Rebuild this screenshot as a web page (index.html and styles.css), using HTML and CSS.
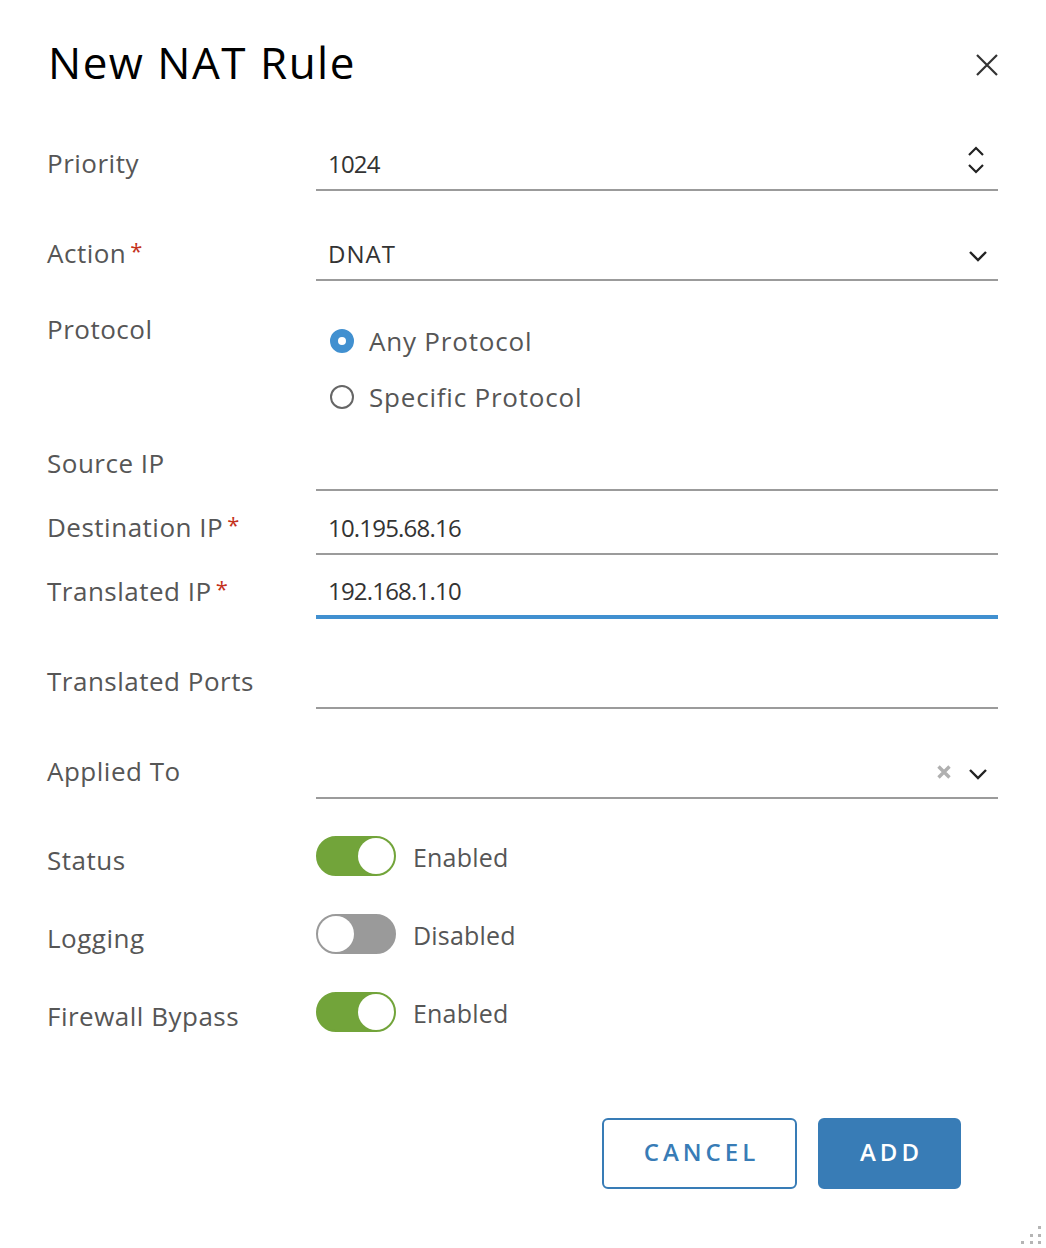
FILE: index.html
```html
<!DOCTYPE html>
<html lang="en">
<head>
<meta charset="utf-8">
<title>New NAT Rule</title>
<link rel="stylesheet" href="styles.css">
</head>
<body>
<div class="modal">
  <div class="header">
    <h1 class="title">New NAT Rule</h1>
    <button class="close" aria-label="Close">
      <svg width="22" height="22" viewBox="0 0 22 22"><path d="M1 1 L21 21 M21 1 L1 21" stroke="#333" stroke-width="2.2" fill="none"/></svg>
    </button>
  </div>

  <div class="form">
    <div class="row">
      <div class="label">Priority</div>
      <div class="control">
        <span class="value num">1024</span>
        <svg class="spin" width="20" height="36" viewBox="0 0 20 36"><path d="M3 10 L10 3 L17 10 M3 20 L10 27 L17 20" stroke="#222" stroke-width="2.2" fill="none"/></svg>
      </div>
    </div>

    <div class="row mt36">
      <div class="label">Action<span class="req">*</span></div>
      <div class="control">
        <span class="value caps">DNAT</span>
        <svg class="chev" width="20" height="12" viewBox="0 0 20 12"><path d="M2 2 L10 10 L18 2" stroke="#222" stroke-width="2.4" fill="none"/></svg>
      </div>
    </div>

    <div class="row mt32">
      <div class="label label-top">Protocol</div>
      <div class="radios">
        <div class="radio-item"><span class="radio checked"></span><span class="radio-text">Any Protocol</span></div>
        <div class="radio-item"><span class="radio"></span><span class="radio-text">Specific Protocol</span></div>
      </div>
    </div>

    <div class="row mt12">
      <div class="label">Source IP</div>
      <div class="control"></div>
    </div>

    <div class="row mt10">
      <div class="label">Destination IP<span class="req">*</span></div>
      <div class="control"><span class="value num">10.195.68.16</span></div>
    </div>

    <div class="row mt10">
      <div class="label">Translated IP<span class="req">*</span></div>
      <div class="control focused"><span class="value num">192.168.1.10</span></div>
    </div>

    <div class="row mt36">
      <div class="label">Translated Ports</div>
      <div class="control"></div>
    </div>

    <div class="row mt36">
      <div class="label">Applied To</div>
      <div class="control">
        <svg class="clear" width="14" height="14" viewBox="0 0 14 14"><path d="M1.5 1.5 L12.5 12.5 M12.5 1.5 L1.5 12.5" stroke="#b0b0b0" stroke-width="3.4" fill="none"/></svg>
        <svg class="chev chev-applied" width="20" height="12" viewBox="0 0 20 12"><path d="M2 2 L10 10 L18 2" stroke="#222" stroke-width="2.4" fill="none"/></svg>
      </div>
    </div>

    <div class="row toggle-row mt36">
      <div class="label label-toggle">Status</div>
      <div class="toggle-wrap"><span class="toggle on"></span><span class="toggle-text">Enabled</span></div>
    </div>

    <div class="row toggle-row mt33">
      <div class="label label-toggle">Logging</div>
      <div class="toggle-wrap"><span class="toggle"></span><span class="toggle-text">Disabled</span></div>
    </div>

    <div class="row toggle-row mt33">
      <div class="label label-toggle">Firewall Bypass</div>
      <div class="toggle-wrap"><span class="toggle on"></span><span class="toggle-text">Enabled</span></div>
    </div>
  </div>

  <div class="footer">
    <button class="btn btn-outline">CANCEL</button>
    <button class="btn btn-primary">ADD</button>
  </div>

  <svg class="grip" width="24" height="20" viewBox="0 0 24 20">
    <rect x="18" y="0" width="3" height="3" fill="#b5b5b5"/>
    <rect x="10" y="8" width="3" height="3" fill="#b5b5b5"/>
    <rect x="18" y="8" width="3" height="3" fill="#b5b5b5"/>
    <rect x="1" y="15" width="3" height="3" fill="#b5b5b5"/>
    <rect x="10" y="15" width="3" height="3" fill="#b5b5b5"/>
    <rect x="18" y="15" width="3" height="3" fill="#b5b5b5"/>
  </svg>
</div>
</body>
</html>
```

FILE: styles.css
```css
html, body {
  margin: 0;
  padding: 0;
  background: #fff;
}

body {
  font-family: "Open Sans", "Noto Sans", sans-serif;
}

.modal {
  position: relative;
  box-sizing: border-box;
  min-height: 1248px;
  padding: 40px 48px 0 47px;
}

.header {
  display: flex;
  align-items: center;
  justify-content: space-between;
}

.title {
  margin: 0 0 0 1px;
  font-size: 44px;
  line-height: 44px;
  font-weight: 400;
  letter-spacing: 1.5px;
  color: #000;
}

.close {
  border: 0;
  background: none;
  padding: 0;
  margin: 6px 0 0 0;
  display: flex;
}

.form {
  margin-top: 53px;
}

.row {
  display: flex;
  align-items: flex-start;
}

.mt10 { margin-top: 10px; }
.mt12 { margin-top: 12px; }
.mt32 { margin-top: 32px; }
.mt33 { margin-top: 33px; }
.mt36 { margin-top: 36px; }

.label {
  flex: none;
  width: 269px;
  font-size: 26px;
  line-height: 52px;
  letter-spacing: 0.5px;
  color: #565656;
  white-space: nowrap;
}

.req {
  color: #c4321c;
  font-size: 22px;
  margin-left: 4px;
  position: relative;
  top: -4px;
}

.label-top {
  line-height: 32px;
}

.label-toggle {
  line-height: 40px;
  margin-top: 5px;
}

.control {
  flex: 1;
  box-sizing: border-box;
  height: 54px;
  display: flex;
  align-items: center;
  padding: 0 10px 0 12px;
  border-bottom: 2px solid #9b9b9b;
  color: #333;
}

.control.focused {
  border-bottom: 4px solid #4190d0;
}

.value {
  flex: 1;
  font-size: 24px;
}

.value.num {
  letter-spacing: -0.8px;
}

.value.caps {
  letter-spacing: 1px;
}

.spin {
  margin-left: auto;
  margin-right: 2px;
}

.chev {
  margin-left: auto;
  margin-top: 5px;
}

.clear {
  margin-left: auto;
  margin-right: 17px;
  margin-top: 2px;
}

.chev-applied {
  margin-left: 0;
}

.radios {
  display: flex;
  flex-direction: column;
  padding-left: 14px;
}

.radio-item {
  display: flex;
  align-items: center;
  height: 56px;
}

.radio {
  box-sizing: border-box;
  width: 24px;
  height: 24px;
  border-radius: 50%;
  border: 2px solid #666;
  background: #fff;
  flex: none;
}

.radio.checked {
  border: 8px solid #4190d0;
}

.radio-text {
  margin-left: 15px;
  font-size: 26px;
  letter-spacing: 0.8px;
  color: #565656;
}

.toggle-wrap {
  display: flex;
  align-items: center;
}

.toggle {
  position: relative;
  box-sizing: border-box;
  width: 80px;
  height: 40px;
  border-radius: 20px;
  background: #9a9a9a;
  border: 2px solid #9a9a9a;
  flex: none;
}

.toggle::after {
  content: "";
  position: absolute;
  top: 0;
  left: 0;
  width: 36px;
  height: 36px;
  border-radius: 50%;
  background: #fff;
}

.toggle.on {
  background: #72a43a;
  border-color: #72a43a;
}

.toggle.on::after {
  left: auto;
  right: 0;
}

.toggle-text {
  margin-left: 17px;
  font-size: 25px;
  line-height: 40px;
  padding-top: 2px;
  letter-spacing: 0.2px;
  color: #565656;
}

.footer {
  display: flex;
  justify-content: flex-end;
  gap: 21px;
  margin-top: 82px;
  padding-right: 37px;
}

.btn {
  box-sizing: border-box;
  height: 71px;
  border-radius: 6px;
  font-family: "Open Sans", "Noto Sans", sans-serif;
  font-size: 24px;
  font-weight: 600;
  letter-spacing: 4px;
  padding: 0 0 5px 4px;
  cursor: pointer;
}

.btn-outline {
  width: 195px;
  background: #fff;
  color: #387cb6;
  border: 2px solid #387cb6;
}

.btn-primary {
  width: 143px;
  background: #387cb6;
  color: #fff;
  border: 2px solid #387cb6;
}

.grip {
  position: absolute;
  right: 2px;
  bottom: 2px;
}
```
